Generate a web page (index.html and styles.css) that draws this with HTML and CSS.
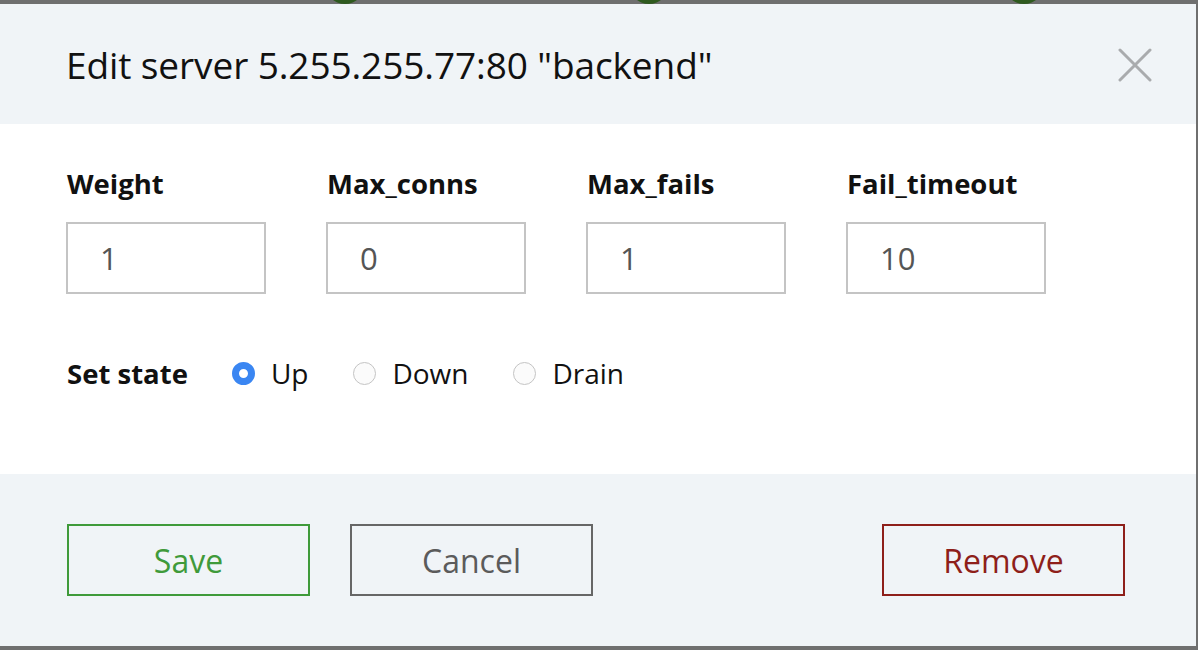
FILE: index.html
```html
<!DOCTYPE html>
<html lang="en">
<head>
    <meta charset="UTF-8">
    <meta name="viewport" content="width=device-width, initial-scale=1.0">
    <title>Edit server</title>
    <link rel="stylesheet" href="styles.css">
</head>
<body>
    <div class="backdrop">
        <span class="dot dot-1"></span>
        <span class="dot dot-2"></span>
        <span class="dot dot-3"></span>
    </div>

    <div class="modal">
        <div class="modal-header">
            <h1>Edit server 5.255.255.77:80 "backend"</h1>
            <button class="close" aria-label="Close">
                <svg width="34" height="34" viewBox="0 0 34 34">
                    <path d="M2 2 L32 32 M32 2 L2 32" stroke="#a9abad" stroke-width="3" stroke-linecap="round"/>
                </svg>
            </button>
        </div>

        <div class="modal-body">
            <div class="fields">
                <div class="field">
                    <label for="weight">Weight</label>
                    <input type="text" id="weight" value="1">
                </div>
                <div class="field">
                    <label for="max_conns">Max_conns</label>
                    <input type="text" id="max_conns" value="0">
                </div>
                <div class="field">
                    <label for="max_fails">Max_fails</label>
                    <input type="text" id="max_fails" value="1">
                </div>
                <div class="field">
                    <label for="fail_timeout">Fail_timeout</label>
                    <input type="text" id="fail_timeout" value="10">
                </div>
            </div>

            <div class="state">
                <span class="state-label">Set state</span>
                <label class="radio"><span class="circle checked"></span>Up</label>
                <label class="radio"><span class="circle"></span>Down</label>
                <label class="radio"><span class="circle"></span>Drain</label>
            </div>
        </div>

        <div class="modal-footer">
            <button class="btn btn-save">Save</button>
            <button class="btn btn-cancel">Cancel</button>
            <button class="btn btn-remove">Remove</button>
        </div>
    </div>
</body>
</html>
```

FILE: styles.css
```css
body {
    font-family: 'Open Sans', 'Noto Sans', sans-serif;
    margin: 0;
    padding: 0;
    width: 1198px;
    height: 650px;
    overflow: hidden;
    background-color: #6f6f6f;
    position: relative;
}
.backdrop {
    height: 4px;
    position: relative;
    overflow: hidden;
}
.dot {
    position: absolute;
    top: -36px;
    width: 40px;
    height: 40px;
    border-radius: 50%;
    background-color: #2f5a1f;
}
.dot-1 { left: 325px; }
.dot-2 { left: 629px; }
.dot-3 { left: 1004px; }
.modal {
    width: 1196px;
    height: 642px;
    display: flex;
    flex-direction: column;
    background-color: #fff;
}
.modal-header {
    height: 120px;
    background-color: #f0f4f7;
    display: flex;
    align-items: center;
    justify-content: space-between;
    padding: 0 44px 0 66px;
}
h1 {
    margin: 0;
    font-size: 37px;
    font-weight: 400;
    color: #111;
    letter-spacing: -0.1px;
}
.close {
    background: none;
    border: none;
    padding: 0;
    width: 34px;
    height: 34px;
    margin-top: 2px;
}
.modal-body {
    height: 350px;
    padding: 40px 0 0 66px;
    box-sizing: border-box;
}
.fields {
    display: flex;
    gap: 60px;
}
.field {
    width: 200px;
}
.field label {
    display: block;
    font-size: 27.5px;
    font-weight: 700;
    color: #111;
    line-height: 40px;
    margin-bottom: 18px;
    padding-left: 1px;
}
.field input {
    width: 200px;
    height: 72px;
    box-sizing: border-box;
    border: 2px solid #c4c4c4;
    padding: 0 32px;
    font-family: inherit;
    font-size: 31px;
    color: #555;
    outline: none;
}
.state {
    display: flex;
    align-items: center;
    margin-top: 60px;
    font-size: 28px;
    color: #111;
    padding-left: 1px;
}
.state-label {
    font-weight: 700;
    font-size: 27.5px;
    margin-right: 44px;
}
.radio {
    display: flex;
    align-items: center;
    margin-right: 45px;
}
.circle {
    width: 23px;
    height: 23px;
    border-radius: 50%;
    border: 1px solid #c4c4c4;
    background-color: #fbfbfb;
    margin-right: 16px;
    box-sizing: border-box;
}
.circle.checked {
    border: 7.5px solid #3a86f2;
    background-color: #fff;
}
.modal-footer {
    flex: 1;
    background-color: #f0f4f7;
    display: flex;
    align-items: flex-start;
    padding: 50px 0 0 67px;
}
.btn {
    width: 243px;
    height: 72px;
    background: none;
    font-family: inherit;
    font-size: 32px;
    border: 2px solid;
    cursor: pointer;
}
.btn-save {
    color: #3f9a3a;
    border-color: #3f9a3a;
}
.btn-cancel {
    color: #5b5b5b;
    border-color: #666;
    margin-left: 40px;
}
.btn-remove {
    color: #8e1f1a;
    border-color: #8e1f1a;
    margin-left: 289px;
}
```
